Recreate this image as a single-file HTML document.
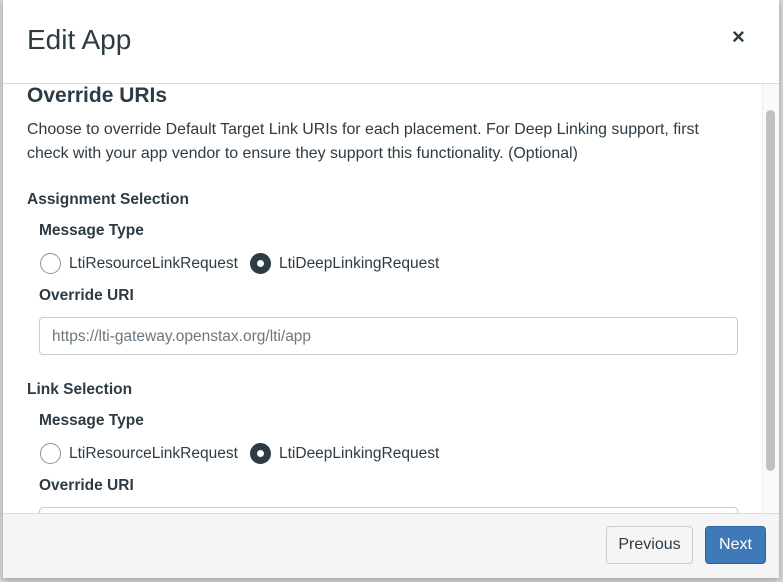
<!DOCTYPE html>
<html><head><meta charset="utf-8"><style>
*{box-sizing:border-box;margin:0;padding:0}
body{width:783px;height:582px;background:#d6d6d6;font-family:"Liberation Sans",sans-serif;color:#2d3b45;position:relative;overflow:hidden}
.modal{position:absolute;left:3px;top:0;width:776px;height:578px;background:#fff;box-shadow:0 2px 6px rgba(0,0,0,.25)}
.a{position:absolute;white-space:nowrap}
.radio{position:absolute;width:21px;height:21px;border-radius:50%;border:1px solid #8f9499;background:#fff}
.radio.on{border:7px solid #2d3b45}
.inp{position:absolute;left:36px;width:699px;height:38px;border:1px solid #c7cdd1;border-radius:4px;background:#fff}
</style></head><body>
<div class="modal">
 <div class="a" style="left:24px;top:24px;font-size:28px;font-weight:300">Edit App</div>
 <div class="a" style="left:729px;top:24px;font-size:22px;font-weight:bold">×</div>
 <div style="position:absolute;left:0;top:83px;width:776px;height:1px;background:#dadcde"></div>
 <div style="position:absolute;left:759px;top:84px;width:17px;height:429px;background:#fafafa;border-left:1px solid #eee"></div>
 <div style="position:absolute;left:763px;top:110px;width:9px;height:361px;border-radius:5px;background:#c1c1c1"></div>

 <div class="a" style="left:24px;top:84px;font-size:21px;font-weight:bold">Override URIs</div>
 <div class="a" style="left:24px;top:118px;font-size:15.9px;line-height:24px">Choose to override Default Target Link URIs for each placement. For Deep Linking support, first<br>check with your app vendor to ensure they support this functionality. (Optional)</div>

 <div class="a" style="left:24px;top:191px;font-size:15.5px;font-weight:bold">Assignment Selection</div>
 <div class="a" style="left:36px;top:222px;font-size:15.5px;font-weight:bold">Message Type</div>
 <div class="radio" style="left:37px;top:253px"></div>
 <div class="a" style="left:66px;top:255px;font-size:15.5px">LtiResourceLinkRequest</div>
 <div class="radio on" style="left:247px;top:253px"></div>
 <div class="a" style="left:276px;top:255px;font-size:15.5px">LtiDeepLinkingRequest</div>
 <div class="a" style="left:36px;top:287px;font-size:15.5px;font-weight:bold">Override URI</div>
 <div class="inp" style="top:317px"></div>
 <div class="a" style="left:49px;top:328px;font-size:15.5px;color:#6b7780">https://lti-gateway.openstax.org/lti/app</div>

 <div class="a" style="left:24px;top:381px;font-size:15.5px;font-weight:bold">Link Selection</div>
 <div class="a" style="left:36px;top:412px;font-size:15.5px;font-weight:bold">Message Type</div>
 <div class="radio" style="left:37px;top:443px"></div>
 <div class="a" style="left:66px;top:445px;font-size:15.5px">LtiResourceLinkRequest</div>
 <div class="radio on" style="left:247px;top:443px"></div>
 <div class="a" style="left:276px;top:445px;font-size:15.5px">LtiDeepLinkingRequest</div>
 <div class="a" style="left:36px;top:477px;font-size:15.5px;font-weight:bold">Override URI</div>
 <div class="inp" style="top:507px"></div>

 <div style="position:absolute;left:0;top:513px;width:776px;height:65px;background:#f5f5f5;border-top:1px solid #dadcde"></div>
 <div style="position:absolute;left:603px;top:526px;width:87px;height:38px;border:1px solid #c7cdd1;border-radius:4px;background:#f5f5f5;font-size:16px;line-height:35px;text-align:center">Previous</div>
 <div style="position:absolute;left:702px;top:526px;width:61px;height:38px;border:1px solid #2f63a0;border-radius:4px;background:#3f79b8;color:#fff;font-size:16px;line-height:35px;text-align:center">Next</div>
</div>
</body></html>
